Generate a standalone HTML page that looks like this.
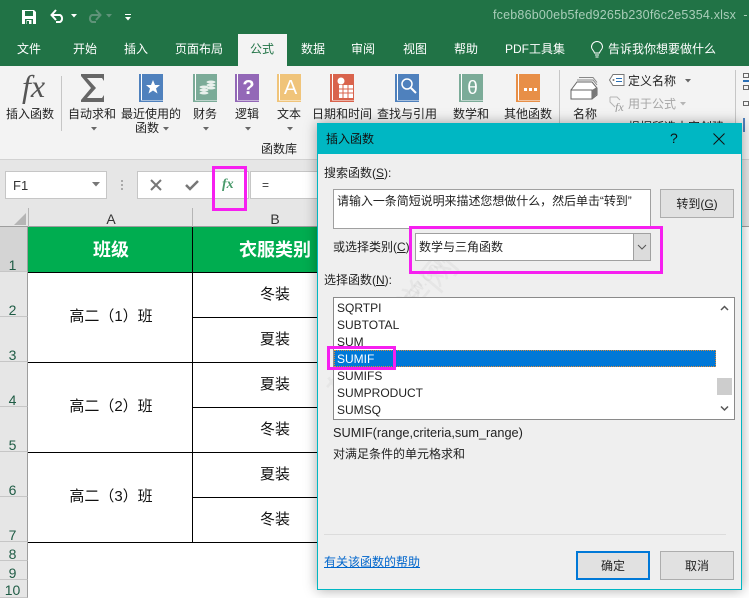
<!DOCTYPE html>
<html lang="zh"><head><meta charset="utf-8"><style>
html,body{margin:0;padding:0;background:#fff}
#p{position:relative;width:749px;height:598px;overflow:hidden;font-family:"Liberation Sans","Noto Sans CJK SC",sans-serif;font-size:12px;color:#333;background:#fff}
#p div,#p svg{position:absolute;box-sizing:border-box}
.t{white-space:nowrap;line-height:16px;height:16px}
.c{transform:translateX(-50%)}
.w{color:#fff}
.k{color:#222}
.rh{left:0;width:28px;background:#e6e6e6;border-bottom:1px solid #c6c6c6;border-right:1px solid #9e9e9e;text-align:center;color:#1f5c45;font-size:14px;line-height:18px;padding-top:0}
.rh span{position:absolute;left:0;right:2px;bottom:-3px;text-align:center}
.ln{background:#000}
.cell{font-size:15px;color:#111}
u{text-decoration:underline}
</style></head><body><div id="p">
<!-- title + tabs -->
<div style="left:0;top:0;width:749px;height:66px;background:#217346"></div>
<svg style="left:21px;top:9px" width="16" height="16" viewBox="0 0 16 16"><path d="M1 1h12l2 2v12H1z" fill="#fff"/><path d="M4 2h8v5H4z" fill="#217346"/><path d="M4 10h8v5H4z" fill="#217346"/><path d="M5.500 11h5v4h-5z" fill="#fff"/><path d="M6 12h2v3H6z" fill="#217346"/></svg>
<svg style="left:50px;top:8px" width="16" height="16" viewBox="0 0 16 16"><path d="M2 7h8a4 4 0 0 1 0 7H6" fill="none" stroke="#fff" stroke-width="2"/><path d="M6 2 1.500 7 6 12" fill="none" stroke="#fff" stroke-width="2"/></svg>
<svg style="left:71px;top:14px" width="6" height="4"><path d="M0 0h6L3 3.500z" fill="#fff"/></svg>
<svg style="left:86px;top:8px" width="16" height="16" viewBox="0 0 16 16"><path d="M14 7H6a4 4 0 0 0 0 7h4" fill="none" stroke="#5f9379" stroke-width="2"/><path d="M10 2l4.500 5L10 12" fill="none" stroke="#5f9379" stroke-width="2"/></svg>
<svg style="left:106px;top:14px" width="6" height="4"><path d="M0 0h6L3 3.500z" fill="#5f9379"/></svg>
<svg style="left:124px;top:13px" width="8" height="8"><path d="M1 1h6v1H1z" fill="#fff"/><path d="M1 4h6L4 7.500z" fill="#fff"/></svg>
<div class="t" style="left:493px;top:7px;color:#a9cdb9;font-size:12.500px;letter-spacing:.2px">fceb86b00eb5fed9265b230f6c2e5354.xlsx &nbsp;-</div>
<div class="t w c" style="left:29px;top:41px">文件</div>
<div class="t w c" style="left:85px;top:41px">开始</div>
<div class="t w c" style="left:136px;top:41px">插入</div>
<div class="t w c" style="left:199px;top:41px">页面布局</div>
<div style="left:238px;top:34px;width:49px;height:32px;background:#f3f3f3"></div>
<div class="t c" style="left:262px;top:41px;color:#217346">公式</div>
<div class="t w c" style="left:313px;top:41px">数据</div>
<div class="t w c" style="left:363px;top:41px">审阅</div>
<div class="t w c" style="left:415px;top:41px">视图</div>
<div class="t w c" style="left:466px;top:41px">帮助</div>
<div class="t w" style="left:505px;top:41px">PDF工具集</div>
<svg style="left:590px;top:41px" width="14" height="18" viewBox="0 0 14 18"><path d="M4.500 12C4 9.500 1.500 8.500 1.500 6a5.500 5.500 0 0 1 11 0c0 2.500-2.500 3.500-3 6z M5 14h4M5.500 16h3" fill="none" stroke="#fff" stroke-width="1"/></svg>
<div class="t w" style="left:608px;top:41px">告诉我你想要做什么</div>
<!-- ribbon -->
<div style="left:0;top:66px;width:749px;height:94px;background:#f3f3f3;border-bottom:1px solid #d2d2d2"></div>
<div class="t" style="left:22px;top:68px;height:38px;line-height:38px;font:italic 32px 'Liberation Serif',serif;color:#555">fx</div>
<div class="t k c" style="left:30px;top:106px">插入函数</div>
<div style="left:61px;top:76px;width:1px;height:55px;background:#c6c6c6"></div>
<svg style="left:80px;top:74px" width="25" height="28" viewBox="0 0 25 28"><path d="M1 0h23v7l-2-3H7l9 10-9 10h15l2-3v7H1v-2l10-12L1 2z" fill="#666"/></svg>
<div class="t k c" style="left:92px;top:106px">自动求和</div>
<svg style="left:91px;top:127px" width="6" height="4"><path d="M0 0h6L3 3.500z" fill="#666"/></svg>
<!-- book icons -->
<svg style="left:139px;top:74px" width="24" height="28"><rect width="24" height="28" fill="#fff"/><rect x="0" y="0" width="2" height="28" fill="#4f81bd"/><rect x="3" y="0" width="21" height="26" fill="#4f81bd"/><rect y="26.500" width="24" height="1.500" fill="#4f81bd"/><path d="M14 6l2 5h5l-4 3.500 1.500 5L14 16.500 9.500 19.500 11 14.500 7 11h5z" fill="#fff"/></svg>
<svg style="left:193px;top:74px" width="24" height="28"><rect width="24" height="28" fill="#fff"/><rect width="2" height="28" fill="#7bab98"/><rect x="3" width="21" height="26" fill="#7bab98"/><rect y="26.500" width="24" height="1.500" fill="#7bab98"/><ellipse cx="18" cy="8" rx="4.500" ry="1.500" fill="#e8f0ec"/><ellipse cx="18" cy="11" rx="4.500" ry="1.500" fill="#e8f0ec"/><ellipse cx="18" cy="14" rx="4.500" ry="1.500" fill="#e8f0ec"/><ellipse cx="11" cy="13" rx="4.500" ry="1.500" fill="#e8f0ec"/><ellipse cx="11" cy="16" rx="4.500" ry="1.500" fill="#e8f0ec"/><ellipse cx="11" cy="19" rx="4.500" ry="1.500" fill="#e8f0ec"/></svg>
<svg style="left:235px;top:74px" width="24" height="28"><rect width="24" height="28" fill="#fff"/><rect width="2" height="28" fill="#9368b7"/><rect x="3" width="21" height="26" fill="#9368b7"/><rect y="26.500" width="24" height="1.500" fill="#9368b7"/><text x="13.500" y="20" font-family="Liberation Sans" font-weight="700" font-size="20" fill="#fff" text-anchor="middle">?</text></svg>
<svg style="left:277px;top:74px" width="24" height="28"><rect width="24" height="28" fill="#fff"/><rect width="2" height="28" fill="#f0c47a"/><rect x="3" width="21" height="26" fill="#f0c47a"/><rect y="26.500" width="24" height="1.500" fill="#f0c47a"/><text x="13.500" y="20" font-family="Liberation Sans" font-size="20" fill="#fff" text-anchor="middle">A</text></svg>
<svg style="left:330px;top:74px" width="24" height="28"><rect width="24" height="28" fill="#fff"/><rect width="2" height="28" fill="#d9634c"/><rect x="3" width="21" height="26" fill="#d9634c"/><rect y="26.500" width="24" height="1.500" fill="#d9634c"/><rect x="9" y="11" width="14" height="13" fill="#fff"/><path d="M9 15h14M9 19h14M13 11v13M18 11v13" stroke="#d9634c"/><circle cx="11" cy="7" r="3.500" fill="#fff"/></svg>
<svg style="left:395px;top:74px" width="24" height="28"><rect width="24" height="28" fill="#fff"/><rect width="2" height="28" fill="#4f81bd"/><rect x="3" width="21" height="26" fill="#4f81bd"/><rect y="26.500" width="24" height="1.500" fill="#4f81bd"/><circle cx="12" cy="10" r="5" fill="none" stroke="#fff" stroke-width="1.500"/><path d="M16 14l5 5" stroke="#fff" stroke-width="2"/></svg>
<svg style="left:459px;top:74px" width="24" height="28"><rect width="24" height="28" fill="#fff"/><rect width="2" height="28" fill="#7bab98"/><rect x="3" width="21" height="26" fill="#7bab98"/><rect y="26.500" width="24" height="1.500" fill="#7bab98"/><text x="13.500" y="20" font-family="Liberation Sans" font-size="19" fill="#fff" text-anchor="middle">θ</text></svg>
<svg style="left:516px;top:74px" width="24" height="28"><rect width="24" height="28" fill="#fff"/><rect width="2" height="28" fill="#e88f47"/><rect x="3" width="21" height="26" fill="#e88f47"/><rect y="26.500" width="24" height="1.500" fill="#e88f47"/><path d="M8 14h3v3H8zM13 14h3v3h-3zM18 14h3v3h-3z" fill="#fff"/></svg>
<div class="t k c" style="left:151px;top:106px">最近使用的</div>
<div class="t k c" style="left:147px;top:120px">函数</div>
<svg style="left:163px;top:127px" width="6" height="4"><path d="M0 0h6L3 3.500z" fill="#666"/></svg>
<div class="t k c" style="left:205px;top:106px">财务</div>
<svg style="left:203px;top:127px" width="6" height="4"><path d="M0 0h6L3 3.500z" fill="#666"/></svg>
<div class="t k c" style="left:247px;top:106px">逻辑</div>
<svg style="left:245px;top:127px" width="6" height="4"><path d="M0 0h6L3 3.500z" fill="#666"/></svg>
<div class="t k c" style="left:289px;top:106px">文本</div>
<svg style="left:287px;top:127px" width="6" height="4"><path d="M0 0h6L3 3.500z" fill="#666"/></svg>
<div class="t k c" style="left:342px;top:106px">日期和时间</div>
<div class="t k c" style="left:407px;top:106px">查找与引用</div>
<div class="t k c" style="left:471px;top:106px">数学和</div>
<div class="t k c" style="left:528px;top:106px">其他函数</div>
<div class="t k c" style="left:279px;top:141px">函数库</div>
<div style="left:559px;top:70px;width:1px;height:55px;background:#c6c6c6"></div>
<svg style="left:570px;top:76px" width="28" height="25" viewBox="0 0 28 25"><path d="M1 14 7 6h15l5 6v7l-5 4H1z" fill="#fff" stroke="#666"/><rect x="1" y="14" width="21" height="9" fill="#fff" stroke="#666"/><path d="M7 4h16l4 5M9 1.500h14l4 5" fill="none" stroke="#888"/><path d="M22 14l5-3v7l-5 5z" fill="#777"/></svg>
<div class="t k c" style="left:585px;top:106px">名称</div>
<svg style="left:609px;top:74px" width="16" height="12" viewBox="0 0 16 12"><path d="M4 .5h11v11H4L.5 6z" fill="#fff" stroke="#777"/><path d="M7 4.500h6M7 7.500h6" stroke="#2a6fb5"/><circle cx="4.500" cy="6" r="1" fill="#777"/></svg>
<div class="t k" style="left:628px;top:73px">定义名称</div>
<svg style="left:685px;top:79px" width="6" height="4"><path d="M0 0h6L3 3.500z" fill="#666"/></svg>
<svg style="left:609px;top:96px" width="16" height="16" viewBox="0 0 16 16"><path d="M1 1h7l3 3M1 1v5l5 5" fill="none" stroke="#b5b5b5"/><text x="6" y="15" font-family="Liberation Serif" font-style="italic" font-size="12" fill="#999">fx</text></svg>
<div class="t" style="left:628px;top:96px;color:#a6a6a6">用于公式</div>
<svg style="left:680px;top:102px" width="6" height="4"><path d="M0 0h6L3 3.500z" fill="#b5b5b5"/></svg>
<div class="t k" style="left:628px;top:119px">根据所选内容创建</div>
<div style="left:735px;top:70px;width:1px;height:55px;background:#c6c6c6"></div>
<div style="left:743px;top:73px;width:6px;height:5px;border:1px solid #666"></div>
<div style="left:743px;top:80px;width:6px;height:2px;background:#2a6fb5"></div>
<div style="left:743px;top:85px;width:6px;height:5px;border:1px solid #666"></div>
<div style="left:743px;top:101px;width:6px;height:5px;border:1px solid #666"></div>
<div style="left:743px;top:118px;width:2px;height:14px;background:#4f81bd"></div>
<!-- formula bar -->
<div style="left:0;top:160px;width:749px;height:48px;background:#e6e6e6"></div>
<div style="left:5px;top:171px;width:102px;height:28px;background:#fff;border:1px solid #c6c6c6"></div>
<div class="t" style="left:13px;top:178px;color:#333;font-size:13px">F1</div>
<svg style="left:92px;top:182px" width="8" height="5"><path d="M0 0h8L4 4.500z" fill="#777"/></svg>
<div style="left:121px;top:180px;width:2px;height:2px;background:#aaa;box-shadow:0 4px #aaa,0 8px #aaa"></div>
<div style="left:137px;top:171px;width:112px;height:28px;background:#fff;border:1px solid #c6c6c6"></div>
<svg style="left:150px;top:179px" width="12" height="12"><path d="M1 1l10 10M11 1 1 11" stroke="#777" stroke-width="2"/></svg>
<svg style="left:185px;top:179px" width="14" height="12"><path d="M1 6l4 4 8-8" fill="none" stroke="#777" stroke-width="2.500"/></svg>
<div class="t" style="left:222px;top:177px;font:italic 700 14px/16px 'Liberation Serif',serif;color:#4a9a6b">fx</div>
<div style="left:250px;top:171px;width:70px;height:28px;background:#fff;border:1px solid #c6c6c6;border-right:0"></div>
<div class="t" style="left:262px;top:177px;color:#333;font-size:12px">=</div>
<!-- headers -->
<div style="left:0;top:208px;width:749px;height:19px;background:#e6e6e6;border-bottom:1px solid #9e9e9e"></div>
<div style="left:28px;top:208px;width:1px;height:19px;background:#b5b5b5"></div>
<div style="left:192px;top:208px;width:1px;height:19px;background:#b5b5b5"></div>
<svg style="left:14px;top:213px" width="12" height="12"><path d="M12 0v12H0z" fill="#b5b5b5"/></svg>
<div class="t c" style="left:111px;top:211px;font-size:14px;color:#333">A</div>
<div class="t c" style="left:275px;top:211px;font-size:14px;color:#333">B</div>
<div style="left:212px;top:166px;width:35px;height:45px;border:3px solid #f61ff0"></div>
<div class="rh" style="top:227px;height:45px;background:#d4d4d4"><span>1</span></div>
<div class="rh" style="top:272px;height:45px"><span>2</span></div>
<div class="rh" style="top:317px;height:45px"><span>3</span></div>
<div class="rh" style="top:362px;height:45px"><span>4</span></div>
<div class="rh" style="top:407px;height:45px"><span>5</span></div>
<div class="rh" style="top:452px;height:45px"><span>6</span></div>
<div class="rh" style="top:497px;height:45px"><span>7</span></div>
<div class="rh" style="top:542px;height:19px"><span>8</span></div>
<div class="rh" style="top:561px;height:19px"><span>9</span></div>
<div class="rh" style="top:580px;height:18px"><span style="bottom:-2px">10</span></div>
<!-- table -->
<div style="left:28px;top:227px;width:300px;height:45px;background:#00ad50"></div>
<div class="t c w" style="left:111px;top:239px;font-size:18px;font-weight:700;line-height:22px;height:22px">班级</div>
<div class="t c w" style="left:275px;top:239px;font-size:18px;font-weight:700;line-height:22px;height:22px">衣服类别</div>
<div class="ln" style="left:192px;top:227px;width:1px;height:315px"></div>
<div class="ln" style="left:28px;top:272px;width:300px;height:1px"></div>
<div class="ln" style="left:192px;top:317px;width:130px;height:1px"></div>
<div class="ln" style="left:28px;top:362px;width:300px;height:1px"></div>
<div class="ln" style="left:192px;top:407px;width:130px;height:1px"></div>
<div class="ln" style="left:28px;top:452px;width:300px;height:1px"></div>
<div class="ln" style="left:192px;top:497px;width:130px;height:1px"></div>
<div class="ln" style="left:28px;top:542px;width:300px;height:1px"></div>
<div class="t c cell" style="left:111px;top:309px">高二（1）班</div>
<div class="t c cell" style="left:111px;top:399px">高二（2）班</div>
<div class="t c cell" style="left:111px;top:489px">高二（3）班</div>
<div class="t c cell" style="left:275px;top:287px">冬装</div>
<div class="t c cell" style="left:275px;top:332px">夏装</div>
<div class="t c cell" style="left:275px;top:377px">夏装</div>
<div class="t c cell" style="left:275px;top:422px">冬装</div>
<div class="t c cell" style="left:275px;top:467px">夏装</div>
<div class="t c cell" style="left:275px;top:512px">冬装</div>
<!-- dialog -->
<div style="left:317px;top:123px;width:425px;height:467px;background:#efefef;border:1px solid #00b7c3;box-shadow:0 0 12px rgba(0,0,0,.35)"></div>
<div class="t" style="left:300px;top:300px;width:200px;height:40px;line-height:40px;font-size:36px;color:rgba(120,120,120,.07);transform:rotate(-50deg)">软件自学网</div>
<div class="t" style="left:345px;top:290px;height:20px;line-height:20px;font-size:18px;color:rgba(120,120,120,.08);transform:rotate(-50deg)">www.rjzxw.com</div>
<div style="left:317px;top:123px;width:425px;height:31px;background:#00b7c3"></div>
<div class="t" style="left:326px;top:131px;color:#111">插入函数</div>
<div class="t" style="left:670px;top:130px;color:#111;font-size:14px">?</div>
<svg style="left:713px;top:133px" width="12" height="12"><path d="M.5.500l11 11M11.500.500l-11 11" stroke="#111"/></svg>
<div class="t k" style="left:324px;top:165px">搜索函数(<u>S</u>):</div>
<div style="left:333px;top:189px;width:318px;height:40px;background:#fff;border:1px solid #a0a0a0"></div>
<div class="t k" style="left:337px;top:193px;letter-spacing:-.05px">请输入一条简短说明来描述您想做什么，然后单击“转到”</div>
<div style="left:660px;top:189px;width:74px;height:29px;background:#e1e1e1;border:1px solid #adadad"></div>
<div class="t k c" style="left:697px;top:196px">转到(<u>G</u>)</div>
<div class="t k" style="left:333px;top:239px">或选择类别(<u>C</u>)</div>
<div style="left:415px;top:233px;width:236px;height:28px;background:#fff;border:1px solid #a0a0a0"></div>
<div style="left:633px;top:234px;width:17px;height:26px;background:#dcdcdc;border-left:1px solid #a0a0a0"></div>
<svg style="left:637px;top:244px" width="10" height="6"><path d="M1 1l4 4 4-4" fill="none" stroke="#555"/></svg>
<div class="t k" style="left:419px;top:239px">数学与三角函数</div>
<div style="left:409px;top:226px;width:254px;height:48px;border:3px solid #f61ff0"></div>
<div class="t k" style="left:324px;top:272px">选择函数(<u>N</u>):</div>
<div style="left:333px;top:297px;width:402px;height:123px;background:#fff;border:1px solid #8a8a8a"></div>
<div class="t k" style="left:337px;top:300px">SQRTPI</div>
<div class="t k" style="left:337px;top:317px">SUBTOTAL</div>
<div class="t k" style="left:337px;top:334px">SUM</div>
<div style="left:334px;top:350px;width:382px;height:17px;background:#0078d7;border:1px dotted #d98a3a"></div>
<div class="t w" style="left:337px;top:351px">SUMIF</div>
<div class="t k" style="left:337px;top:368px">SUMIFS</div>
<div class="t k" style="left:337px;top:385px">SUMPRODUCT</div>
<div class="t k" style="left:337px;top:402px">SUMSQ</div>
<div style="left:717px;top:378px;width:15px;height:17px;background:#cdcdcd"></div>
<svg style="left:720px;top:305px" width="9" height="7"><path d="M1 5l3.500-3.500L8 5" fill="none" stroke="#555" stroke-width="1.500"/></svg>
<svg style="left:720px;top:405px" width="9" height="7"><path d="M1 1.500 4.500 5 8 1.500" fill="none" stroke="#555" stroke-width="1.500"/></svg>
<div style="left:327px;top:346px;width:69px;height:24px;border:3px solid #f61ff0"></div>
<div class="t k" style="left:333px;top:425px;font-size:12.750px">SUMIF(range,criteria,sum_range)</div>
<div class="t k" style="left:333px;top:446px">对满足条件的单元格求和</div>
<div style="left:324px;top:534px;width:402px;height:1px;background:#dcdcdc"></div>
<div class="t" style="left:324px;top:554px;color:#0066cc;text-decoration:underline">有关该函数的帮助</div>
<div style="left:576px;top:551px;width:74px;height:29px;background:#e1e1e1;border:2px solid #0078d7"></div>
<div class="t k c" style="left:613px;top:558px">确定</div>
<div style="left:660px;top:551px;width:74px;height:29px;background:#e1e1e1;border:1px solid #adadad"></div>
<div class="t k c" style="left:697px;top:558px">取消</div>
</div></body></html>
